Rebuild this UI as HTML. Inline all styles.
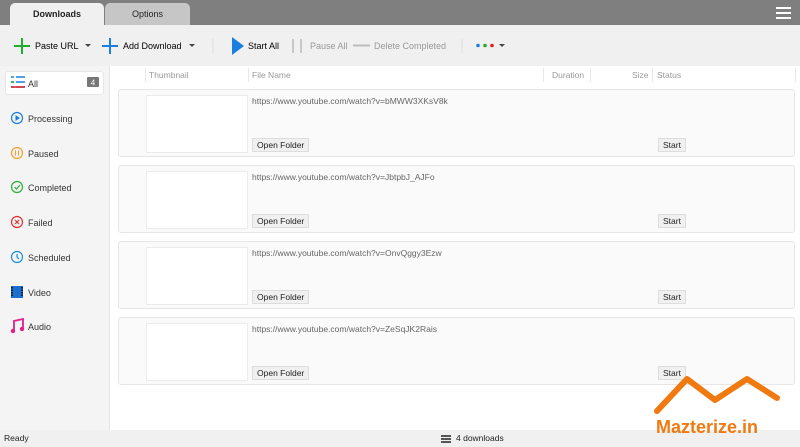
<!DOCTYPE html><html><head><style>
*{box-sizing:border-box;margin:0;padding:0}
body{width:800px;height:447px;overflow:hidden;font-family:"Liberation Sans",sans-serif;font-size:9px;color:#222;background:#fff;position:relative}
.a{position:absolute}
.tb{left:0;top:0;width:800px;height:25px;background:#7f7f7f}
.tab{top:3px;height:22px;border-radius:5px 5px 0 0;text-align:center;line-height:22px;font-size:9px}
.tool{left:0;top:25px;width:800px;height:41px;background:#f0f0f0}
.side{left:0;top:66px;width:110px;height:364px;background:#f4f4f4;border-right:1px solid #e4e4e4}
.si{left:11px;font-size:9px;color:#333}
.card{left:118px;width:677px;height:68px;background:#fafafa;border:1px solid #e6e6e6;border-radius:3px}
.th{left:27px;top:5px;width:102px;height:58px;background:#fff;border:1px solid #ececec}
.url{left:133px;top:6px;color:#666;font-size:8.5px}
.btn{height:14px;line-height:12px;border:1px solid #ddd;background:#f0f0f0;font-size:8.5px;padding:0 4px;top:48px}
.hd{top:70px;color:#999;font-size:8.5px}
.sep{top:68px;width:1px;height:14px;background:#e8e8e8}
.status{left:0;top:430px;width:800px;height:17px;background:#f0f0f0;font-size:8.5px;line-height:17px}
</style></head><body>
<div class="a tb"></div>
<div class="a tab" style="left:10px;width:94px;background:#f0f0f0;font-weight:bold">Downloads</div>
<div class="a tab" style="left:105px;width:85px;background:#c6c6c6">Options</div>
<div class="a" style="left:776px;top:7px;width:15px;height:2px;background:#fff;box-shadow:0 5px 0 #fff,0 10px 0 #fff"></div>
<div class="a tool"></div>
<svg class="a" style="left:0;top:25px" width="520" height="41">
<path d="M22 13v16M14 21h16" stroke="#1fae2e" stroke-width="2"/>
<text x="35" y="24" font-size="9" font-family="Liberation Sans">Paste URL</text>
<path d="M85 19h6l-3 3z" fill="#444"/>
<path d="M110 13v16M102 21h16" stroke="#1a7fe0" stroke-width="2"/>
<text x="123" y="24" font-size="9" font-family="Liberation Sans">Add Download</text>
<path d="M189 19h6l-3 3z" fill="#444"/>
<line x1="213" y1="14" x2="213" y2="28" stroke="#ddd"/>
<path d="M232 12l12 9-12 9z" fill="#1a7fe0"/>
<text x="248" y="24" font-size="9" font-family="Liberation Sans">Start All</text>
<path d="M293 14v14M301 14v14" stroke="#c8c8c8" stroke-width="2"/>
<text x="310" y="24" font-size="9" fill="#999" font-family="Liberation Sans">Pause All</text>
<line x1="353" y1="20.5" x2="370" y2="20.5" stroke="#bbb" stroke-width="2"/>
<text x="374" y="24" font-size="9" fill="#999" font-family="Liberation Sans">Delete Completed</text>
<line x1="462" y1="14" x2="462" y2="28" stroke="#ddd"/>
<circle cx="478" cy="20.5" r="1.8" fill="#1a7fe0"/><circle cx="485" cy="20.5" r="1.8" fill="#1fae2e"/><circle cx="492" cy="20.5" r="1.8" fill="#e02020"/>
<path d="M499 19h6l-3 3z" fill="#444"/>
</svg>
<div class="a side"></div>
<div class="a" style="left:5px;top:71px;width:99px;height:24px;background:#fff;border:1px solid #e6e6e6;border-radius:3px"></div>
<svg class="a" style="left:0;top:66px" width="110" height="280">
<path d="M11 11h3M16 11h9M11 16h3M16 16h9M11 21h3M16 21h9" stroke="#1a7fe0" stroke-width="1.5"/>
<path d="M11 21h14" stroke="#e02020" stroke-width="1.5"/><path d="M11 16h3" stroke="#1fae2e" stroke-width="1.5"/>
<rect x="87" y="11" width="12" height="10" rx="1" fill="#777"/><text x="93" y="19.5" font-size="8" fill="#fff" text-anchor="middle" font-family="Liberation Sans">4</text>
<circle cx="17" cy="52" r="5.5" fill="none" stroke="#1a7fe0" stroke-width="1.2"/><path d="M15.5 49v6l4.5-3z" fill="#1a7fe0"/>
<circle cx="17" cy="87" r="5.5" fill="none" stroke="#f0a030" stroke-width="1.2"/><path d="M15.5 84.5v5M18.5 84.5v5" stroke="#f0a030" stroke-width="1.2"/>
<circle cx="17" cy="121" r="5.5" fill="none" stroke="#2aae3a" stroke-width="1.2"/><path d="M14.5 121l2 2 3.5-4" fill="none" stroke="#2aae3a" stroke-width="1.2"/>
<circle cx="17" cy="156" r="5.5" fill="none" stroke="#e03030" stroke-width="1.2"/><path d="M15 154l4 4M19 154l-4 4" stroke="#e03030" stroke-width="1.2"/>
<circle cx="17" cy="191" r="5.5" fill="none" stroke="#1a8fe0" stroke-width="1.2"/><path d="M17 188v3l2 2" fill="none" stroke="#1a8fe0" stroke-width="1.2"/>
<rect x="11" y="220" width="12" height="12" fill="#1a6fd0"/><path d="M12 221v10M22 221v10" stroke="#222" stroke-width="2" stroke-dasharray="1.5 1"/>
<path d="M14 265v-10l9-2v10" fill="none" stroke="#e0208a" stroke-width="1.8"/><circle cx="13" cy="265" r="2.2" fill="#e0208a"/><circle cx="22" cy="263" r="2.2" fill="#e0208a"/>
</svg>
<div class="a si" style="left:28px;top:79px">All</div>
<div class="a si" style="left:28px;top:114px">Processing</div>
<div class="a si" style="left:28px;top:149px">Paused</div>
<div class="a si" style="left:28px;top:183px">Completed</div>
<div class="a si" style="left:28px;top:218px">Failed</div>
<div class="a si" style="left:28px;top:253px">Scheduled</div>
<div class="a si" style="left:28px;top:288px">Video</div>
<div class="a si" style="left:28px;top:322px">Audio</div>
<div class="a sep" style="left:145px"></div><div class="a hd" style="left:149px">Thumbnail</div>
<div class="a sep" style="left:248px"></div><div class="a hd" style="left:252px">File Name</div>
<div class="a sep" style="left:543px"></div><div class="a hd" style="left:552px">Duration</div>
<div class="a sep" style="left:590px"></div><div class="a hd" style="left:632px">Size</div>
<div class="a sep" style="left:652px"></div><div class="a hd" style="left:657px">Status</div>
<div class="a sep" style="left:795px"></div>
<div class="a card" style="top:89px"><div class="a th"></div><div class="a url">https://www.youtube.com/watch?v=bMWW3XKsV8k</div><div class="a btn" style="left:133px">Open Folder</div><div class="a btn" style="left:539px">Start</div></div>
<div class="a card" style="top:165px"><div class="a th"></div><div class="a url">https://www.youtube.com/watch?v=JbtpbJ_AJFo</div><div class="a btn" style="left:133px">Open Folder</div><div class="a btn" style="left:539px">Start</div></div>
<div class="a card" style="top:241px"><div class="a th"></div><div class="a url">https://www.youtube.com/watch?v=OnvQggy3Ezw</div><div class="a btn" style="left:133px">Open Folder</div><div class="a btn" style="left:539px">Start</div></div>
<div class="a card" style="top:317px"><div class="a th"></div><div class="a url">https://www.youtube.com/watch?v=ZeSqJK2Rais</div><div class="a btn" style="left:133px">Open Folder</div><div class="a btn" style="left:539px">Start</div></div>
<div class="a status"><span style="position:absolute;left:4px">Ready</span>
<span style="position:absolute;left:441px;top:5px;width:10px;height:1.5px;background:#555;box-shadow:0 3px 0 #555,0 6px 0 #555"></span>
<span style="position:absolute;left:456px">4 downloads</span></div>
<svg class="a" style="left:640px;top:370px" width="160" height="77">
<path d="M17 41L47 9 L75 30 L107 9 L137 28" fill="none" stroke="#f07a10" stroke-width="6" stroke-linecap="round" stroke-linejoin="round"/>
<text x="16" y="63" font-size="18" font-weight="bold" fill="#f07a10" font-family="Liberation Sans">Mazterize.in</text>
</svg>
</body></html>
